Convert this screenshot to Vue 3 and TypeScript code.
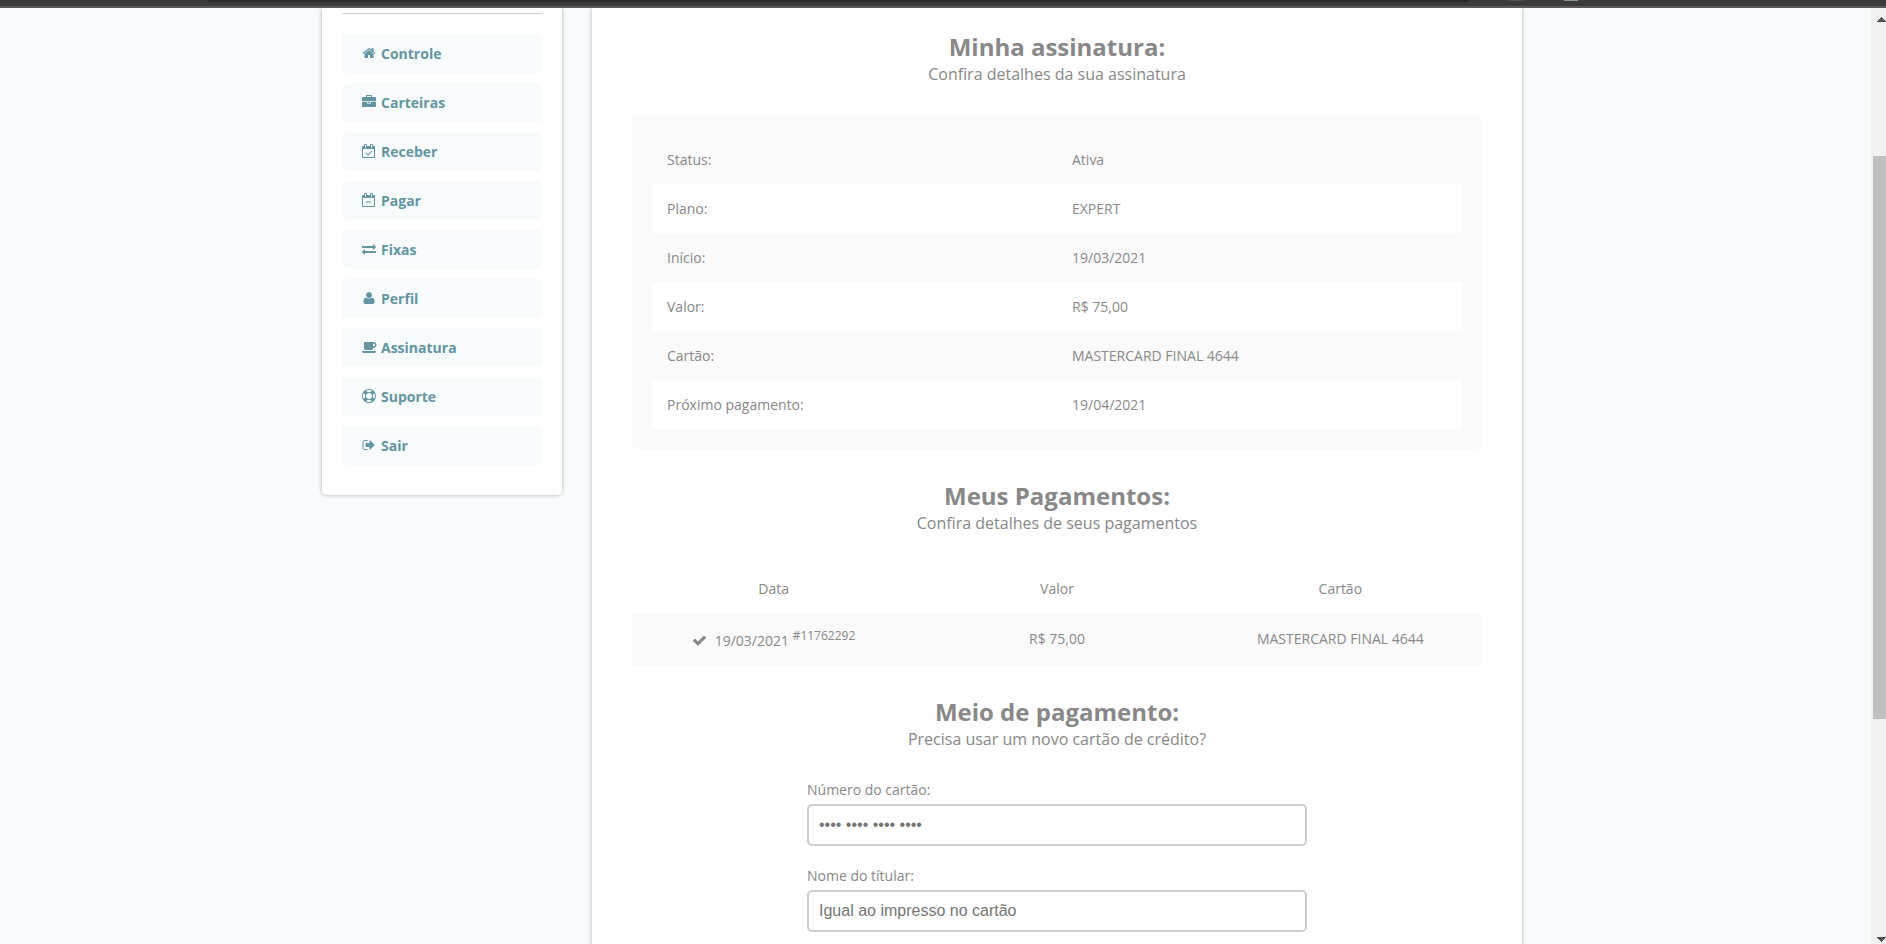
<script setup lang="ts">
import { ref } from 'vue'

interface MenuItem {
  label: string
  path: string
}

interface Detail {
  label: string
  value: string
}

interface Payment {
  date: string
  code: string
  amount: string
  card: string
}

const calendarFrame =
  'M128 1664h1408v-1024h-1408v1024zm384-1216v-288q0-14-9-23t-23-9h-64q-14 0-23 9t-9 23v288q0 14 9 23t23 9h64q14 0 23-9t9-23zm768 0v-288q0-14-9-23t-23-9h-64q-14 0-23 9t-9 23v288q0 14 9 23t23 9h64q14 0 23-9t9-23zm384-64v1280q0 52-38 90t-90 38h-1408q-52 0-90-38t-38-90v-1280q0-52 38-90t90-38h128v-96q0-66 47-113t113-47h64q66 0 113 47t47 113v96h384v-96q0-66 47-113t113-47h64q66 0 113 47t47 113v96h128q52 0 90 38t38 90z'

const checkPath =
  'M1671 566q0 40-28 68l-724 724-136 136q-28 28-68 28t-68-28l-136-136-362-362q-28-28-28-68t28-68l136-136q28-28 68-28t68 28l294 295 656-657q28-28 68-28t68 28l136 136q28 28 28 68z'

const menu: MenuItem[] = [
  {
    label: 'Controle',
    path: 'M1472 992v480q0 26-19 45t-45 19h-384v-384h-256v384h-384q-26 0-45-19t-19-45v-480q0-1 .5-3t.5-3l575-474 575 474q1 2 1 6zm223-69l-62 74q-8 9-21 11h-3q-13 0-21-7l-692-577-692 577q-12 8-24 7-13-2-21-11l-62-74q-8-10-7-23.5t11-21.5l719-599q32-26 76-26t76 26l244 204v-195q0-14 9-23t23-9h192q14 0 23 9t9 23v408l219 182q10 8 11 21.5t-7 23.5z',
  },
  {
    label: 'Carteiras',
    path: 'M640 256h512v-128h-512v128zm1152 640v480q0 66-47 113t-113 47h-1472q-66 0-113-47t-47-113v-480h672v160q0 26 19 45t45 19h320q26 0 45-19t19-45v-160h672zm-768 0v128h-256v-128h256zm768-480v384h-1792v-384q0-66 47-113t113-47h352v-160q0-40 28-68t68-28h576q40 0 68 28t28 68v160h352q66 0 113 47t47 113z',
  },
  {
    label: 'Receber',
    path:
      'M1303 964l-512 512q-10 9-23 9t-23-9l-288-288q-9-10-9-23t9-22l46-46q9-9 22-9t23 9l220 220 444-444q10-9 23-9t22 9l46 46q9 9 9 22t-9 23z' +
      calendarFrame,
  },
  {
    label: 'Pagar',
    path: 'M512 1088h640v128h-640z' + calendarFrame,
  },
  {
    label: 'Fixas',
    path: 'M1792 1184v192q0 13-9.5 22.5t-22.5 9.5h-1376v192q0 13-9.5 22.5t-22.5 9.5q-12 0-24-10l-319-320q-9-9-9-22 0-14 9-23l320-320q9-9 23-9 13 0 22.5 9.5t9.5 22.5v192h1376q13 0 22.5 9.5t9.5 22.5zm0-544q0 14-9 23l-320 320q-9 9-23 9-13 0-22.5-9.5t-9.5-22.5v-192h-1376q-13 0-22.5-9.5t-9.5-22.5v-192q0-13 9.5-22.5t22.5-9.5h1376v-192q0-14 9-23t23-9q12 0 24 10l319 319q9 9 9 23z',
  },
  {
    label: 'Perfil',
    path: 'M1600 1405q0 120-73 189.5t-194 69.5h-874q-121 0-194-69.5t-73-189.5q0-53 3.5-103.5t14-109 26.5-108.5 43-97.500 62-81 85.500-53.500 111.500-20q9 0 42 21.500t74.500 48 108 48 133.500 21.500 133.500-21.500 108-48 74.500-48 42-21.500q61 0 111.500 20t85.500 53.500 62 81 43 97.500 26.500 108.500 14 109 3.500 103.500zm-320-893q0 159-112.500 271.500t-271.500 112.500-271.500-112.500-112.500-271.500 112.500-271.500 271.500-112.500 271.500 112.500 112.500 271.500z',
  },
  {
    label: 'Assinatura',
    path: 'M1664 640q0-80-56-136t-136-56h-64v384h64q80 0 136-56t56-136zm-1664 768h1792q0 106-75 181t-181 75h-1280q-106 0-181-75t-75-181zm1856-768q0 159-112.5 271.5t-271.5 112.5h-64v32q0 92-66 158t-158 66h-704q-92 0-158-66t-66-158v-736q0-26 19-45t45-19h1152q159 0 271.5 112.5t112.5 271.5z',
  },
  {
    label: 'Suporte',
    path: 'M896 0q182 0 348 71t286 191 191 286 71 348-71 348-191 286-286 191-348 71-348-71-286-191-191-286-71-348 71-348 191-286 286-191 348-71zm0 128q-190 0-361 90l194 194q82-28 167-28t167 28l194-194q-171-90-361-90zm-678 1129l194-194q-28-82-28-167t28-167l-194-194q-90 171-90 361t90 361zm678 407q190 0 361-90l-194-194q-82 28-167 28t-167-28l-194 194q171 90 361 90zm0-384q159 0 271.5-112.5t112.5-271.5-112.5-271.5-271.5-112.5-271.5 112.5-112.5 271.5 112.5 271.5 271.5 112.5zm484-217l194 194q90-171 90-361t-90-361l-194 194q28 82 28 167t-28 167z',
  },
  {
    label: 'Sair',
    path: 'M704 1440q0 4 1 20t.5 26.5-3 23.5-10 19.5-20.5 6.5h-320q-119 0-203.5-84.5t-84.5-203.5v-704q0-119 84.5-203.5t203.5-84.5h320q13 0 22.5 9.5t9.5 22.5q0 4 1 20t.5 26.5-3 23.5-10 19.5-20.5 6.5h-320q-66 0-113 47t-47 113v704q0 66 47 113t113 47h312l11.5 1 11.5 3 8 5.5 7 9 2 13.5zm928-544q0 26-19 45l-544 544q-19 19-45 19t-45-19-19-45v-288h-448q-26 0-45-19t-19-45v-384q0-26 19-45t45-19h448v-288q0-26 19-45t45-19 45 19l544 544q19 19 19 45z',
  },
]

const details: Detail[] = [
  { label: 'Status:', value: 'Ativa' },
  { label: 'Plano:', value: 'EXPERT' },
  { label: 'Início:', value: '19/03/2021' },
  { label: 'Valor:', value: 'R$ 75,00' },
  { label: 'Cartão:', value: 'MASTERCARD FINAL 4644' },
  { label: 'Próximo pagamento:', value: '19/04/2021' },
]

const payments: Payment[] = [
  { date: '19/03/2021', code: '#11762292', amount: 'R$ 75,00', card: 'MASTERCARD FINAL 4644' },
]

const cardNumber = ref('')
const cardHolder = ref('')
</script>

<template>
  <div class="window">
    <div class="toolbar">
      <div class="address"></div>
      <div class="mark"></div>
      <div class="mark light"></div>
    </div>

    <div class="viewport">
      <div class="page">
        <div class="container">
          <aside class="sidebar">
            <hr class="divider" />
            <nav class="menu">
              <a v-for="item in menu" :key="item.label" href="#" class="menu-item">
                <svg class="menu-icon" viewBox="0 0 1792 1792" aria-hidden="true">
                  <path :d="item.path" />
                </svg>
                <span>{{ item.label }}</span>
              </a>
            </nav>
          </aside>

          <main class="panel">
            <section class="section">
              <header class="heading">
                <h2>Minha assinatura:</h2>
                <p>Confira detalhes da sua assinatura</p>
              </header>
              <div class="details">
                <table>
                  <tbody>
                    <tr v-for="row in details" :key="row.label">
                      <th scope="row">{{ row.label }}</th>
                      <td>{{ row.value }}</td>
                    </tr>
                  </tbody>
                </table>
              </div>
            </section>

            <section class="section">
              <header class="heading">
                <h2>Meus Pagamentos:</h2>
                <p>Confira detalhes de seus pagamentos</p>
              </header>
              <table class="payments">
                <thead>
                  <tr>
                    <th scope="col">Data</th>
                    <th scope="col">Valor</th>
                    <th scope="col">Cartão</th>
                  </tr>
                </thead>
                <tbody>
                  <tr v-for="payment in payments" :key="payment.code">
                    <td>
                      <svg class="check" viewBox="0 0 1792 1792" aria-hidden="true">
                        <path :d="checkPath" />
                      </svg>
                      {{ payment.date }} <sup>{{ payment.code }}</sup>
                    </td>
                    <td>{{ payment.amount }}</td>
                    <td>{{ payment.card }}</td>
                  </tr>
                </tbody>
              </table>
            </section>

            <section class="section">
              <header class="heading">
                <h2>Meio de pagamento:</h2>
                <p>Precisa usar um novo cartão de crédito?</p>
              </header>
              <form class="card-form" @submit.prevent>
                <div class="field">
                  <label for="card-number">Número do cartão:</label>
                  <input id="card-number" v-model="cardNumber" type="text" placeholder="•••• •••• •••• ••••" />
                </div>
                <div class="field">
                  <label for="card-holder">Nome do títular:</label>
                  <input id="card-holder" v-model="cardHolder" type="text" placeholder="Igual ao impresso no cartão" />
                </div>
              </form>
            </section>
          </main>
        </div>
      </div>

      <div class="scrollbar" aria-hidden="true">
        <svg class="arrow" viewBox="0 0 9 5"><path d="M4 0h1v1h1v1h1v1h1v1h1v1h-9v-1h1v-1h1v-1h1v-1h1z" /></svg>
        <div class="track"><div class="thumb"></div></div>
        <svg class="arrow" viewBox="0 0 9 5"><path d="M0 0h9v1h-1v1h-1v1h-1v1h-1v1h-1v-1h-1v-1h-1v-1h-1v-1h-1z" /></svg>
      </div>
    </div>
  </div>
</template>

<style>
html,
body {
  margin: 0;
  background: #f7fbfc;
}
</style>

<style scoped>
* {
  box-sizing: border-box;
}

.window {
  display: flex;
  flex-direction: column;
  height: 100vh;
  overflow: hidden;
  font-family: 'Open Sans', 'Noto Sans', sans-serif;
  font-size: 14px;
  color: #888;
}

.toolbar {
  display: flex;
  flex: none;
  align-items: flex-start;
  height: 8px;
  padding: 0 308px 0 208px;
  border-bottom: 2px solid #5a5a5a;
  background: #3b3b3b;
}

.address {
  flex: 1;
  height: 2px;
  margin-right: 40px;
  border-radius: 0 0 2px 2px;
  background: #292929;
}

.mark {
  width: 14px;
  height: 1px;
  background: #505050;
}

.mark.light {
  margin-left: 41px;
  background: #8b9999;
}

.viewport {
  display: flex;
  flex: 1;
  min-height: 0;
}

.page {
  flex: 1;
  min-width: 0;
  overflow: hidden;
  padding-right: 27px;
  background: #f7fbfc;
}

.container {
  display: flex;
  gap: 30px;
  align-items: flex-start;
  width: 100%;
  max-width: 1200px;
  margin: 0 auto;
}

.sidebar {
  flex: none;
  width: 240px;
  padding: 5px 20px 30px;
  border-radius: 0 0 5px 5px;
  background: #fff;
  box-shadow: 0 0 4px rgba(0, 0, 0, 0.3);
}

.divider {
  height: 1px;
  margin: 0 0 20px;
  border: 0;
  background: #ccc;
}

.menu {
  display: flex;
  flex-direction: column;
  gap: 10px;
}

.menu-item {
  display: flex;
  align-items: center;
  gap: 5px;
  padding: 10px 20px;
  border-radius: 5px;
  background: #f7fbfc;
  color: #6395a1;
  font-weight: 700;
  line-height: 19px;
  text-decoration: none;
}

.menu-icon {
  width: 14px;
  height: 14px;
  margin-bottom: 1px;
  overflow: visible;
  fill: currentColor;
}

.panel {
  flex: 1;
  min-width: 0;
  min-height: 100vh;
  padding: 22px 40px 40px;
  background: #fff;
  box-shadow: 0 0 4px rgba(0, 0, 0, 0.3);
}

.section {
  margin-bottom: 30px;
}

.heading {
  margin-bottom: 30px;
  text-align: center;
}

.heading h2 {
  margin: 0;
  font-size: 24px;
  line-height: 33px;
}

.heading p {
  margin: 0;
  font-size: 16px;
  line-height: 22px;
}

table {
  width: 100%;
  border-collapse: collapse;
  table-layout: fixed;
}

th,
td {
  padding: 15px;
  font-weight: 400;
  line-height: 19px;
  text-align: left;
}

.details {
  padding: 20px;
  border-radius: 5px;
  background: #fafafa;
}

.details tr:nth-child(even) {
  background: #fff;
}

.payments th,
.payments td {
  text-align: center;
}

.payments tbody tr {
  background: #fafafa;
}

.payments sup {
  font-size: 12px;
  line-height: 15px;
}

.check {
  width: 15px;
  height: 15px;
  margin-right: 4px;
  fill: currentColor;
  vertical-align: -2px;
}

.card-form {
  display: flex;
  flex-direction: column;
  gap: 20px;
  max-width: 500px;
  margin: 0 auto;
}

.field {
  display: flex;
  flex-direction: column;
  gap: 5px;
}

.field label {
  line-height: 19px;
}

.field input {
  width: 100%;
  height: 42px;
  padding: 10px;
  border: 2px solid #ccc;
  border-radius: 5px;
  background: #fff;
  color: #555;
  font-family: 'Liberation Sans', Arial, sans-serif;
  font-size: 16px;
}

.field input::placeholder {
  color: #757575;
}

.scrollbar {
  display: flex;
  flex: none;
  flex-direction: column;
  align-items: flex-end;
  width: 15px;
  padding: 9px 0 2px;
  background: #f0f0f0;
}

.arrow {
  flex: none;
  width: 9px;
  height: 5px;
  fill: #505050;
  shape-rendering: crispEdges;
}

.track {
  flex: 1;
  width: 13px;
  padding: 134px 0 218px;
}

.thumb {
  height: 100%;
  background: #c0c0c0;
}
</style>
